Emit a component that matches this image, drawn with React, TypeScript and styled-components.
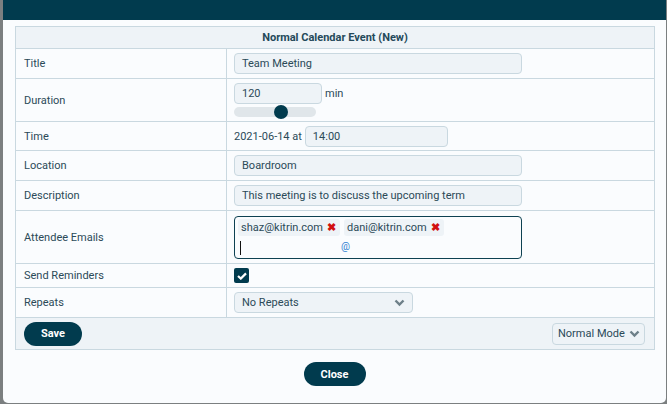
import React from "react";
import styled, { createGlobalStyle } from "styled-components";

const GlobalStyle = createGlobalStyle`
  html, body {
    margin: 0;
    padding: 0;
    height: 100%;
    background: #7b7f80;
    font-family: Roboto, "Liberation Sans", sans-serif;
  }
  #root {
    height: 100%;
  }
`;

const Backdrop = styled.div`
  height: 404px;
  padding: 0 1px 0 3px;
  box-sizing: border-box;
  overflow: hidden;
`;

const Modal = styled.div`
  height: 403px;
  background: #fafcfe;
  border-radius: 0 0 5px 5px;
  display: flex;
  flex-direction: column;
  overflow: hidden;
`;

const ModalHeader = styled.div`
  height: 20px;
  background: #013b4e;
`;

const ModalBody = styled.div`
  padding: 6px 11px 0 12px;
`;

const Table = styled.div`
  border: 1px solid #c9d8e0;
  display: grid;
  grid-template-columns: 211px 1fr;
`;

const TableTitle = styled.div`
  grid-column: 1 / -1;
  background: #eef3f7;
  height: 21px;
  display: flex;
  align-items: center;
  justify-content: center;
  font-size: 11px;
  font-weight: 700;
  color: #24495a;
  border-bottom: 1px solid #c9d8e0;
`;

const Label = styled.div<{ $h: number; $last?: boolean }>`
  height: ${(p) => p.$h}px;
  display: flex;
  align-items: center;
  padding-left: 8px;
  font-size: 11px;
  color: #2b4a58;
  border-right: 1px solid #c9d8e0;
  border-bottom: ${(p) => (p.$last ? "none" : "1px solid #c9d8e0")};
`;

const Cell = styled.div<{ $h: number; $last?: boolean }>`
  height: ${(p) => p.$h}px;
  display: flex;
  flex-direction: column;
  justify-content: center;
  padding-left: 7px;
  font-size: 11px;
  color: #2b4a58;
  border-bottom: ${(p) => (p.$last ? "none" : "1px solid #c9d8e0")};
`;

const Inline = styled.div`
  display: flex;
  align-items: center;
  gap: 3px;
`;

const Field = styled.div<{ $w: number }>`
  width: ${(p) => p.$w}px;
  height: 21px;
  box-sizing: border-box;
  background: #eef3f7;
  border: 1px solid #c9d8e0;
  border-radius: 4px;
  display: flex;
  align-items: center;
  padding: 0 7px;
  font-size: 11px;
  color: #2b4a58;
  white-space: nowrap;
  justify-content: space-between;
`;

const Track = styled.div`
  position: relative;
  width: 82px;
  height: 10px;
  margin-top: 3px;
  background: #e0e6ea;
  border-radius: 5px;
`;

const Thumb = styled.div`
  position: absolute;
  top: -2px;
  left: 40px;
  width: 14px;
  height: 14px;
  border-radius: 50%;
  background: #013b4e;
`;

const TagBox = styled.div`
  width: 288px;
  height: 43px;
  box-sizing: border-box;
  border: 1px solid #0d4152;
  border-radius: 4px;
  background: #fafcfe;
  padding: 2px 3px;
  position: relative;
`;

const Tags = styled.div`
  display: flex;
  gap: 4px;
`;

const Tag = styled.div`
  height: 17px;
  display: flex;
  align-items: center;
  gap: 4px;
  padding: 0 4px 0 3px;
  background: #eef3f7;
  border-radius: 3px;
  font-size: 11px;
  color: #2b4a58;
`;

const Remove = styled.span`
  color: #d10f0f;
  font-weight: 900;
  font-size: 11px;
`;

const Caret = styled.div`
  width: 1px;
  height: 14px;
  background: #111;
  margin: 5px 0 0 2px;
`;

const AtIcon = styled.span`
  position: absolute;
  left: 106px;
  top: 24px;
  font-size: 10px;
  color: #2f80d1;
`;

const Check = styled.div`
  width: 15px;
  height: 15px;
  border-radius: 2px;
  background: #013b4e;
  display: flex;
  align-items: center;
  justify-content: center;
`;

const Footer = styled.div`
  grid-column: 1 / -1;
  height: 31px;
  background: #eef3f7;
  border-top: 1px solid #c9d8e0;
  display: flex;
  align-items: center;
  justify-content: space-between;
  padding: 0 9px 0 8px;
`;

const PillButton = styled.button<{ $w: number }>`
  width: ${(p) => p.$w}px;
  height: 24px;
  border: none;
  border-radius: 12px;
  background: #013b4e;
  color: #fff;
  font-family: Roboto, "Liberation Sans", sans-serif;
  font-size: 11px;
  font-weight: 700;
  padding: 0;
`;

const ModeSelect = styled(Field)`
  background: #eef3f7;
  padding: 0 4px 0 5px;
  height: 22px;
`;

const CloseRow = styled.div`
  display: flex;
  justify-content: center;
  padding-top: 12px;
  padding-right: 1px;
`;

function Chevron() {
  return (
    <svg width="11" height="8" viewBox="0 0 11 8">
      <path d="M1.5 1.5 L5.5 5.5 L9.5 1.5" fill="none" stroke="#6d7f88" strokeWidth="2.4" />
    </svg>
  );
}

export default function App() {
  return (
    <>
      <GlobalStyle />
      <Backdrop>
        <Modal>
          <ModalHeader />
          <ModalBody>
            <Table>
              <TableTitle>Normal Calendar Event (New)</TableTitle>

              <Label $h={29}>Title</Label>
              <Cell $h={29}>
                <Field $w={288}>Team Meeting</Field>
              </Cell>

              <Label $h={42}>Duration</Label>
              <Cell $h={42}>
                <Inline>
                  <Field $w={88}>120</Field>
                  <span>min</span>
                </Inline>
                <Track>
                  <Thumb />
                </Track>
              </Cell>

              <Label $h={28}>Time</Label>
              <Cell $h={28}>
                <Inline>
                  <span>2021-06-14 at</span>
                  <Field $w={143}>14:00</Field>
                </Inline>
              </Cell>

              <Label $h={29}>Location</Label>
              <Cell $h={29}>
                <Field $w={288}>Boardroom</Field>
              </Cell>

              <Label $h={29}>Description</Label>
              <Cell $h={29}>
                <Field $w={288}>This meeting is to discuss the upcoming term</Field>
              </Cell>

              <Label $h={52}>Attendee Emails</Label>
              <Cell $h={52}>
                <TagBox>
                  <Tags>
                    <Tag>
                      shaz@kitrin.com <Remove>✖</Remove>
                    </Tag>
                    <Tag>
                      dani@kitrin.com <Remove>✖</Remove>
                    </Tag>
                  </Tags>
                  <Caret />
                  <AtIcon>@</AtIcon>
                </TagBox>
              </Cell>

              <Label $h={23}>Send Reminders</Label>
              <Cell $h={23}>
                <Check>
                  <svg width="10" height="8" viewBox="0 0 10 8">
                    <path d="M1 4 L3.8 6.6 L9 1.4" fill="none" stroke="#fff" strokeWidth="2.2" />
                  </svg>
                </Check>
              </Cell>

              <Label $h={29} $last>Repeats</Label>
              <Cell $h={29} $last>
                <Field $w={179}>
                  No Repeats
                  <Chevron />
                </Field>
              </Cell>

              <Footer>
                <PillButton $w={58}>Save</PillButton>
                <ModeSelect $w={93}>
                  Normal Mode
                  <Chevron />
                </ModeSelect>
              </Footer>
            </Table>
            <CloseRow>
              <PillButton $w={62}>Close</PillButton>
            </CloseRow>
          </ModalBody>
        </Modal>
      </Backdrop>
    </>
  );
}
